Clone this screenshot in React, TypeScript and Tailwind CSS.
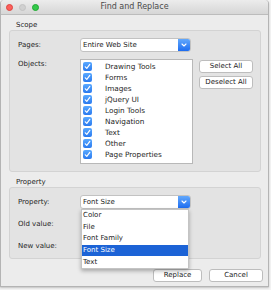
import * as React from "react";

const objects = [
  "Drawing Tools",
  "Forms",
  "Images",
  "jQuery UI",
  "Login Tools",
  "Navigation",
  "Text",
  "Other",
  "Page Properties",
];

const properties = ["Color", "File", "Font Family", "Font Size", "Text"];

function Chevron() {
  return (
    <svg width="6" height="4" viewBox="0 0 6 4" fill="none">
      <path d="M1 1l2 2 2-2" stroke="white" strokeWidth="1.1" strokeLinecap="round" strokeLinejoin="round" />
    </svg>
  );
}

function Select({ value }: { value: string }) {
  return (
    <div className="flex h-[14px] w-[111px] items-stretch overflow-hidden rounded-[3px] border border-[#c2c2c2] bg-white">
      <div className="flex flex-1 items-center pl-[2px] text-[7px] leading-none text-[#1a1a1a]">{value}</div>
      <div className="flex w-[12px] items-center justify-center bg-gradient-to-b from-[#62a8fc] to-[#1c6cf0]">
        <Chevron />
      </div>
    </div>
  );
}

function Check() {
  return (
    <div className="flex h-[9px] w-[9px] items-center justify-center rounded-[2px] bg-gradient-to-b from-[#5aa9ff] to-[#2a79ee]">
      <svg width="7" height="7" viewBox="0 0 7 7" fill="none">
        <path d="M1.3 3.8l1.5 1.6L5.8 1.4" stroke="white" strokeWidth="1.2" strokeLinecap="round" strokeLinejoin="round" />
      </svg>
    </div>
  );
}

function Btn({ label, width }: { label: string; width: string }) {
  return (
    <div
      className={`${width} flex h-[13px] items-center justify-center rounded-[3px] border border-[#bdbdbd] bg-white text-[7px] leading-none text-[#222]`}
    >
      {label}
    </div>
  );
}

export default function App() {
  return (
    <div className="h-[290px] w-[271px] bg-[#f3f3f3] font-['DejaVu_Sans',sans-serif]">
      <div className="h-[287px] w-[269px] rounded-t-[4px] border border-t-0 border-[#b4b4b4] bg-[#ececec] shadow-[0_1px_2px_rgba(0,0,0,0.2)]">
        {/* title bar */}
        <div className="relative flex h-[15px] items-center rounded-t-[4px] border-b border-[#bcbcbc] bg-gradient-to-b from-[#ececec] to-[#d6d6d6]">
          <div className="flex gap-[6px] pl-[5px]">
            <span className="h-[7px] w-[7px] rounded-full border border-[#e0443e] bg-[#fc605c]" />
            <span className="h-[7px] w-[7px] rounded-full border border-[#c3c3c3] bg-[#d0d0d0]" />
            <span className="h-[7px] w-[7px] rounded-full border border-[#1eaa31] bg-[#34c84a]" />
          </div>
          <div className="absolute inset-0 flex items-center justify-center text-[8px] leading-none text-[#4a4a4a]">
            Find and Replace
          </div>
        </div>

        <div className="pl-[8px] text-[7px] leading-none text-[#1e1e1e]">
          <div className="h-[15px] pl-[7px] pt-[6px] leading-[9px]">Scope</div>
          <div className="h-[142px] w-[252px] rounded-[3px] border border-[#d3d3d3] bg-[#e3e3e3] pl-[8px] pt-[7px]">
            <div className="flex items-center">
              <div className="w-[62px]">Pages:</div>
              <Select value="Entire Web Site" />
            </div>
            <div className="mt-[7px] flex">
              <div className="w-[62px] pt-[2px]">Objects:</div>
              <div className="h-[105px] w-[113px] border border-[#b8b8b8] bg-white pl-[2px] pt-[1px]">
                {objects.map((o) => (
                  <div key={o} className="flex h-[11px] items-center">
                    <Check />
                    <span className="ml-[13px] text-[7.3px]">{o}</span>
                  </div>
                ))}
              </div>
              <div className="ml-[6px] flex flex-col gap-[3px] pt-[1px]">
                <Btn label="Select All" width="w-[54px]" />
                <Btn label="Deselect All" width="w-[54px]" />
              </div>
            </div>
          </div>

          <div className="h-[15px] pl-[7px] pt-[6px] leading-[9px]">Property</div>
          <div className="h-[72px] w-[252px] rounded-[3px] border border-[#d3d3d3] bg-[#e3e3e3] pl-[8px] pt-[7px]">
            <div className="flex h-[14px] items-center">
              <div className="w-[62px]">Property:</div>
              <div className="relative">
                <Select value="Font Size" />
                <div className="absolute left-[1px] top-[14px] z-10 w-[108px] border border-[#c4c4c4] bg-white shadow-[0_2px_4px_rgba(0,0,0,0.3)]">
                  {properties.map((p) => (
                    <div
                      key={p}
                      className={`flex h-[11.6px] items-center pl-[1px] ${
                        p === "Font Size" ? "bg-[#1c63d6] text-white" : "text-[#1a1a1a]"
                      }`}
                    >
                      {p}
                    </div>
                  ))}
                </div>
              </div>
            </div>
            <div className="mt-[8px] flex h-[14px] items-center">Old value:</div>
            <div className="mt-[8px] flex h-[14px] items-center">New value:</div>
          </div>

          <div className="mt-[10px] flex w-[254px] justify-end gap-[7px]">
            <Btn label="Replace" width="w-[49px]" />
            <Btn label="Cancel" width="w-[54px]" />
          </div>
        </div>
      </div>
    </div>
  );
}
